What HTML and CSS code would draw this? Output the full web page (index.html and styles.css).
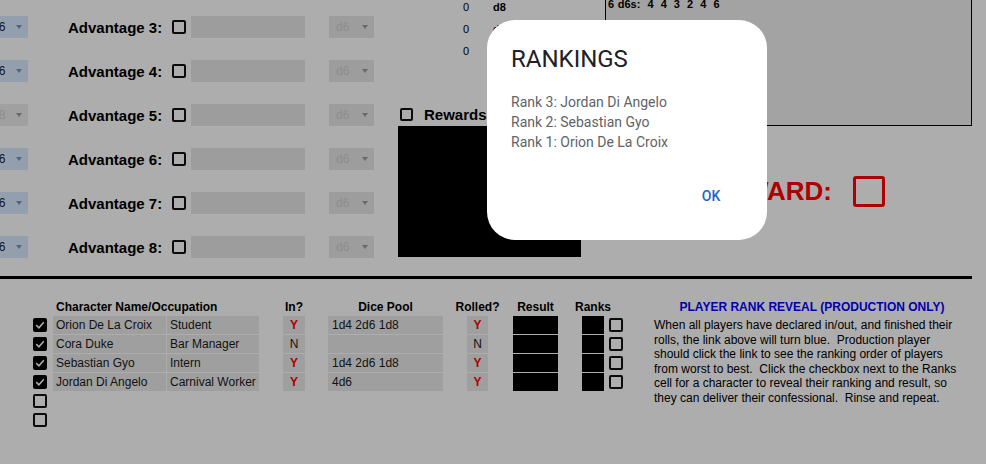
FILE: index.html
```html
<!DOCTYPE html>
<html>
  <head>
    <title>Confessional Roll Sheet</title>
    <link rel="stylesheet" href="styles.css">
  </head>
  <body>
    <div class="sheet">
      <div class="top">
        <div class="advantages">
          <div class="adv-row">
            <div class="select select-blue"><span>d6</span></div>
            <span class="adv-label">Advantage 3:</span>
            <span class="box"></span>
            <span class="adv-input"></span>
            <div class="select select-off"><span>d6</span></div>
          </div>
          <div class="adv-row">
            <div class="select select-blue"><span>d6</span></div>
            <span class="adv-label">Advantage 4:</span>
            <span class="box"></span>
            <span class="adv-input"></span>
            <div class="select select-off"><span>d6</span></div>
          </div>
          <div class="adv-row">
            <div class="select select-blue select-dim"><span>d8</span></div>
            <span class="adv-label">Advantage 5:</span>
            <span class="box"></span>
            <span class="adv-input"></span>
            <div class="select select-off"><span>d6</span></div>
          </div>
          <div class="adv-row">
            <div class="select select-blue"><span>d6</span></div>
            <span class="adv-label">Advantage 6:</span>
            <span class="box"></span>
            <span class="adv-input"></span>
            <div class="select select-off"><span>d6</span></div>
          </div>
          <div class="adv-row">
            <div class="select select-blue"><span>d6</span></div>
            <span class="adv-label">Advantage 7:</span>
            <span class="box"></span>
            <span class="adv-input"></span>
            <div class="select select-off"><span>d6</span></div>
          </div>
          <div class="adv-row">
            <div class="select select-blue"><span>d6</span></div>
            <span class="adv-label">Advantage 8:</span>
            <span class="box"></span>
            <span class="adv-input"></span>
            <div class="select select-off"><span>d6</span></div>
          </div>
        </div>

        <div class="middle">
          <div class="tally">
            <span class="num">0</span><span class="die">d8</span>
            <span class="num">0</span><span class="die">d6</span>
            <span class="num">0</span><span class="die">d4</span>
          </div>
          <div class="rewards-row">
            <span class="box box-small"></span>
            <span class="rewards-label">Rewards</span>
          </div>
          <div class="rewards-panel"></div>
        </div>

        <div class="right">
          <div class="dice-log">6 d6s:  4  4  3  2  4  6</div>
          <div class="reward-flag">
            <span class="reward-label">REWARD:</span>
            <span class="box box-red"></span>
          </div>
        </div>
      </div>

      <div class="divider"></div>

      <div class="bottom">
        <div class="roster">
          <div class="roster-head">
            <span class="c-check"></span>
            <span class="c-name head-left">Character Name/Occupation</span>
            <span class="c-occ"></span>
            <span class="c-in head">In?</span>
            <span class="c-dice head">Dice Pool</span>
            <span class="c-rolled head">Rolled?</span>
            <span class="c-result head">Result</span>
            <span class="c-rank head">Ranks</span>
          </div>

          <div class="roster-row">
            <span class="c-check"><span class="tick"><svg viewBox="0 0 14 14"><polyline points="3.2,7.2 5.9,9.8 10.8,4.3" /></svg></span></span>
            <span class="c-name cell">Orion De La Croix</span>
            <span class="c-occ cell">Student</span>
            <span class="c-in cell yes">Y</span>
            <span class="c-dice cell">1d4 2d6 1d8</span>
            <span class="c-rolled cell yes">Y</span>
            <span class="c-result hidden"></span>
            <span class="c-rank hidden"></span>
            <span class="c-box"><span class="box"></span></span>
          </div>
          <div class="roster-row">
            <span class="c-check"><span class="tick"><svg viewBox="0 0 14 14"><polyline points="3.2,7.2 5.9,9.8 10.8,4.3" /></svg></span></span>
            <span class="c-name cell">Cora Duke</span>
            <span class="c-occ cell">Bar Manager</span>
            <span class="c-in cell no">N</span>
            <span class="c-dice cell"></span>
            <span class="c-rolled cell no">N</span>
            <span class="c-result hidden"></span>
            <span class="c-rank hidden"></span>
            <span class="c-box"><span class="box"></span></span>
          </div>
          <div class="roster-row">
            <span class="c-check"><span class="tick"><svg viewBox="0 0 14 14"><polyline points="3.2,7.2 5.9,9.8 10.8,4.3" /></svg></span></span>
            <span class="c-name cell">Sebastian Gyo</span>
            <span class="c-occ cell">Intern</span>
            <span class="c-in cell yes">Y</span>
            <span class="c-dice cell">1d4 2d6 1d8</span>
            <span class="c-rolled cell yes">Y</span>
            <span class="c-result hidden"></span>
            <span class="c-rank hidden"></span>
            <span class="c-box"><span class="box"></span></span>
          </div>
          <div class="roster-row">
            <span class="c-check"><span class="tick"><svg viewBox="0 0 14 14"><polyline points="3.2,7.2 5.9,9.8 10.8,4.3" /></svg></span></span>
            <span class="c-name cell">Jordan Di Angelo</span>
            <span class="c-occ cell">Carnival Worker</span>
            <span class="c-in cell yes">Y</span>
            <span class="c-dice cell">4d6</span>
            <span class="c-rolled cell yes">Y</span>
            <span class="c-result hidden"></span>
            <span class="c-rank hidden"></span>
            <span class="c-box"><span class="box"></span></span>
          </div>
          <div class="roster-row">
            <span class="c-check"><span class="box"></span></span>
          </div>
          <div class="roster-row">
            <span class="c-check"><span class="box"></span></span>
          </div>
        </div>

        <div class="reveal">
          <div class="reveal-title">PLAYER RANK REVEAL (PRODUCTION ONLY)</div>
          <p class="reveal-text">
            When all players have declared in/out, and finished their<br>
            rolls, the link above will turn blue.&nbsp; Production player<br>
            should click the link to see the ranking order of players<br>
            from worst to best.&nbsp; Click the checkbox next to the Ranks<br>
            cell for a character to reveal their ranking and result, so<br>
            they can deliver their confessional.&nbsp; Rinse and repeat.
          </p>
        </div>
      </div>
    </div>

    <!-- rankings dialog -->
    <div class="scrim"></div>
    <div class="dialog">
      <h2 class="dialog-title">RANKINGS</h2>
      <div class="dialog-body">
        <div>Rank 3: Jordan Di Angelo</div>
        <div>Rank 2: Sebastian Gyo</div>
        <div>Rank 1: Orion De La Croix</div>
      </div>
      <div class="dialog-actions">
        <button class="dialog-btn">OK</button>
      </div>
    </div>
  </body>
</html>
```

FILE: styles.css
```css
body {
  margin: 0;
  background-color: #fff;
  color: #000;
  font-family: "Liberation Sans", Arial, sans-serif;
  overflow: hidden;
}

.sheet {
  width: 986px;
}

/* ---- top area ---- */

.top {
  display: flex;
  height: 276px;
}

.advantages {
  width: 374px;
  padding-top: 16px;
  display: flex;
  flex-direction: column;
  gap: 22px;
}

.adv-row {
  display: flex;
  align-items: center;
  height: 22px;
}

.select {
  width: 45px;
  height: 22px;
  box-sizing: border-box;
  padding: 0 6px 0 7px;
  display: flex;
  align-items: center;
  justify-content: space-between;
  font-size: 12px;
}

.select::after {
  content: "";
  border-left: 3.5px solid transparent;
  border-right: 3.5px solid transparent;
  border-top: 4px solid #9c9c9c;
}

.select-blue {
  width: 43px;
  margin-left: -15px;
  background-color: #dbebff;
  color: #222;
}

.select-blue::after {
  border-top-color: #6f95d0;
}

.select-blue.select-dim {
  background-color: #ececec;
  color: #d0d0d0;
}

.select-blue.select-dim::after {
  border-top-color: #9c9c9c;
}

.select-off {
  margin-left: 24px;
  background-color: #e8e8e8;
  color: #d0d0d0;
}

.adv-label {
  width: 104px;
  margin-left: 40px;
  font-size: 15px;
  font-weight: bold;
  white-space: nowrap;
}

.box {
  display: inline-block;
  width: 14px;
  height: 14px;
  box-sizing: border-box;
  border: 2px solid #111;
  border-radius: 2px;
}

.box-small {
  width: 13px;
  height: 13px;
}

.adv-input {
  width: 114px;
  height: 22px;
  margin-left: 5px;
  background-color: #e8e8e8;
}

.middle {
  width: 183px;
  margin-left: 24px;
}

.tally {
  display: grid;
  grid-template-columns: 71px 1fr;
  grid-auto-rows: 22px;
  column-gap: 24px;
  margin-top: -4px;
  font-size: 11px;
  align-items: center;
}

.num {
  text-align: right;
}

.die {
  font-weight: bold;
}

.rewards-row {
  display: flex;
  align-items: center;
  height: 16px;
  margin-top: 44px;
  padding-left: 2px;
}

.rewards-label {
  margin-left: 11px;
  font-size: 15px;
  font-weight: bold;
  white-space: nowrap;
}

.rewards-panel {
  height: 131px;
  margin-top: 4px;
  background-color: #000;
}

.right {
  width: 367px;
  margin-left: 24px;
}

.dice-log {
  height: 146px;
  margin-top: -20px;
  box-sizing: border-box;
  padding: 17px 0 0 2px;
  border: 1px solid #000;
  background-color: #f1f1f1;
  font-size: 11px;
  font-weight: bold;
  line-height: 13px;
  word-spacing: 0.5px;
  white-space: pre;
}

.reward-flag {
  display: flex;
  align-items: center;
  justify-content: flex-end;
  gap: 21px;
  height: 31px;
  margin-top: 50px;
  padding-right: 87px;
}

.reward-label {
  color: #ff0000;
  font-size: 26px;
  font-weight: bold;
}

.box-red {
  width: 32px;
  height: 31px;
  border: 3px solid #ff0000;
  border-radius: 3px;
}

.divider {
  width: 972px;
  height: 3px;
  background-color: #000;
}

/* ---- roster ---- */

.bottom {
  display: flex;
  padding-top: 21px;
}

.roster {
  padding-left: 33px;
  display: flex;
  flex-direction: column;
  gap: 1px;
}

.roster-head {
  display: flex;
  height: 14px;
  margin-bottom: 1px;
  font-size: 12px;
  font-weight: bold;
  line-height: 14px;
}

.roster-row {
  display: flex;
  height: 18px;
  font-size: 12px;
  line-height: 18px;
}

.c-check {
  width: 14px;
  margin-right: 6px;
  display: flex;
  align-items: center;
}

.c-name {
  width: 113px;
  margin-right: 1px;
}

.c-occ {
  width: 92px;
  margin-right: 24px;
}

.c-in {
  width: 22px;
  margin-right: 23px;
}

.c-dice {
  width: 115px;
  margin-right: 24px;
}

.c-rolled {
  width: 21px;
  margin-right: 25px;
}

.c-result {
  width: 45px;
  margin-right: 24px;
}

.c-rank {
  width: 22px;
  margin-right: 5px;
}

.c-box {
  width: 14px;
  display: flex;
  align-items: center;
}

.head {
  display: flex;
  justify-content: center;
  white-space: nowrap;
}

.head-left {
  padding-left: 3px;
  white-space: nowrap;
  box-sizing: border-box;
}

.cell {
  background-color: #ebebeb;
  padding-left: 3px;
  box-sizing: border-box;
  white-space: nowrap;
  overflow: hidden;
  color: #1a1a1a;
}

.c-dice.cell {
  padding-left: 4px;
}

.yes,
.no {
  padding-left: 0;
  text-align: center;
}

.yes {
  color: #ff0000;
  font-weight: bold;
}

.hidden {
  background-color: #000;
}

.tick {
  width: 14px;
  height: 14px;
  border-radius: 2px;
  background-color: #000;
  display: flex;
}

.tick svg {
  width: 14px;
  height: 14px;
}

.tick polyline {
  fill: none;
  stroke: #fff;
  stroke-width: 1.6;
}

.reveal {
  width: 316px;
  margin-left: 31px;
}

.reveal-title {
  height: 14px;
  text-align: center;
  color: #0000ff;
  font-size: 12px;
  font-weight: bold;
  line-height: 14px;
}

.reveal-text {
  margin: 4px 0 0;
  font-size: 12px;
  line-height: 14.6px;
  white-space: nowrap;
}

/* ---- dialog ---- */

.scrim {
  position: fixed;
  top: 0;
  left: 0;
  width: 100%;
  height: 100%;
  background-color: rgba(0, 0, 0, 0.32);
}

.dialog {
  position: fixed;
  top: 20px;
  left: 487px;
  width: 280px;
  box-sizing: border-box;
  padding: 23px 24px 26px;
  border-radius: 28px;
  background-color: #fff;
  font-family: Roboto, "Noto Sans", sans-serif;
}

.dialog-title {
  margin: 0;
  font-size: 24px;
  font-weight: normal;
  line-height: 32px;
  color: #202124;
}

.dialog-body {
  margin-top: 17px;
  font-size: 14px;
  line-height: 20px;
  color: #5f6368;
}

.dialog-actions {
  display: flex;
  justify-content: flex-end;
  margin-top: 26px;
}

.dialog-btn {
  min-width: 64px;
  height: 36px;
  padding: 0 8px;
  border: none;
  background: none;
  color: #1a66cc;
  font-family: Roboto, "Noto Sans", sans-serif;
  font-size: 14px;
  font-weight: 500;
}
```
